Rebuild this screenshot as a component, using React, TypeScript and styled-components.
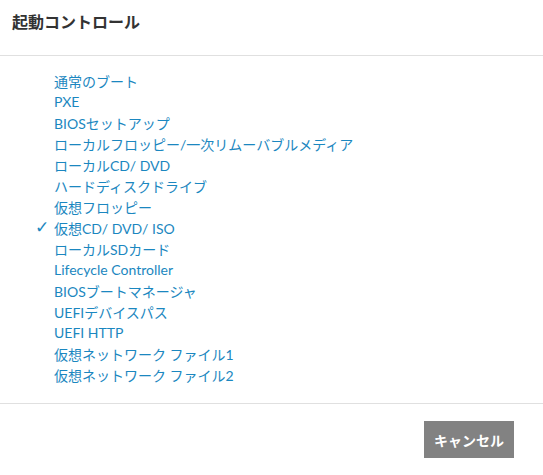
import React from "react";
import styled, { createGlobalStyle } from "styled-components";

const GlobalStyle = createGlobalStyle`
  html, body {
    margin: 0;
    padding: 0;
    background: #ffffff;
  }
  body {
    font-family: Lato, "Noto Sans CJK JP", sans-serif;
  }
`;

const items = [
  "通常のブート",
  "PXE",
  "BIOSセットアップ",
  "ローカルフロッピー/一次リムーバブルメディア",
  "ローカルCD/ DVD",
  "ハードディスクドライブ",
  "仮想フロッピー",
  "仮想CD/ DVD/ ISO",
  "ローカルSDカード",
  "Lifecycle Controller",
  "BIOSブートマネージャ",
  "UEFIデバイスパス",
  "UEFI HTTP",
  "仮想ネットワーク ファイル1",
  "仮想ネットワーク ファイル2",
];

const selected = "仮想CD/ DVD/ ISO";

const App = () => {
  return (
    <>
      <GlobalStyle />
      <Dialog>
        <Header>
          <Title>起動コントロール</Title>
        </Header>
        <Body>
          <List>
            {items.map((item) => (
              <Item key={item}>
                <Check>{item === selected ? "✓" : ""}</Check>
                <ItemLink>{item}</ItemLink>
              </Item>
            ))}
          </List>
        </Body>
        <Footer>
          <CancelButton>キャンセル</CancelButton>
        </Footer>
      </Dialog>
    </>
  );
};

export default App;

const Dialog = styled.div`
  width: 543px;
  height: 475px;
  display: flex;
  flex-direction: column;
  background: #fff;
`;

const Header = styled.div`
  height: 56px;
  box-sizing: border-box;
  padding: 11px 12px 0;
  border-bottom: 1px solid #e0e0e0;
`;

const Title = styled.h1`
  margin: 0;
  font-size: 16px;
  font-weight: bold;
  color: #333;
  line-height: 22px;
`;

const Body = styled.div`
  height: 348px;
  box-sizing: border-box;
  padding-top: 14px;
  border-bottom: 1px solid #e0e0e0;
`;

const List = styled.ul`
  list-style: none;
  margin: 0;
  padding: 0 0 0 35px;
`;

const Item = styled.li`
  display: flex;
  align-items: center;
  height: 21px;
  font-size: 14px;
  color: #1b87c0;
`;

const Check = styled.span`
  width: 19px;
  font-size: 17px;
  font-weight: bold;
  line-height: 1;
  color: #1b87c0;
  font-family: "DejaVu Sans", sans-serif;
`;

const ItemLink = styled.span`
  cursor: pointer;
  white-space: nowrap;
`;

const Footer = styled.div`
  flex: 1;
  display: flex;
  justify-content: flex-end;
  align-items: flex-start;
  padding: 17px 29px 0 0;
`;

const CancelButton = styled.button`
  height: 37px;
  padding: 0 10px;
  border: none;
  background: #828282;
  color: #fff;
  font-family: Lato, "Noto Sans CJK JP", sans-serif;
  font-size: 14px;
  font-weight: bold;
`;
